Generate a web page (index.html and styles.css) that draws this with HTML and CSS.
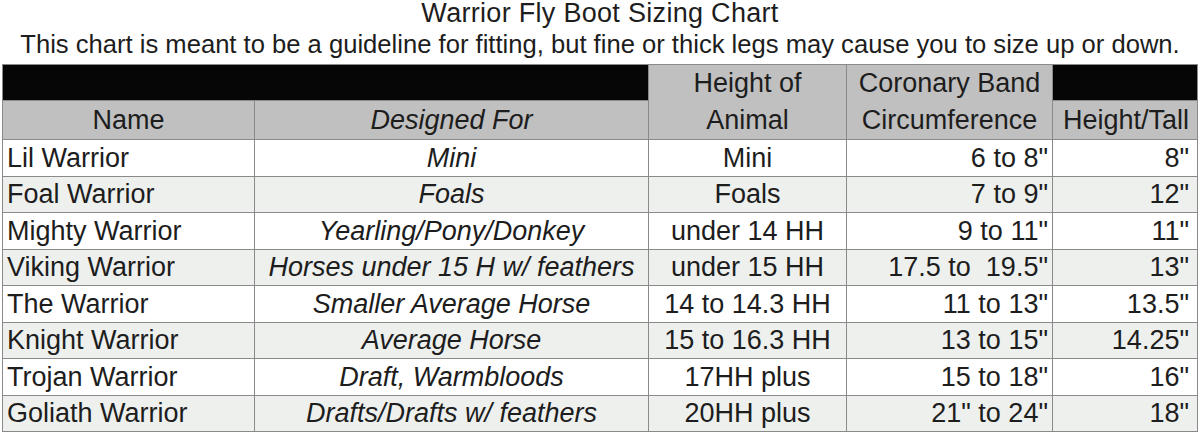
FILE: index.html
```html
<!DOCTYPE html>
<html lang="en">
<head>
<meta charset="utf-8">
<title>Warrior Fly Boot Sizing Chart</title>
<link rel="stylesheet" href="styles.css">
</head>
<body>
<div class="page">
  <h1 class="title">Warrior Fly Boot Sizing Chart</h1>
  <p class="subtitle">This chart is meant to be a guideline for fitting, but fine or thick legs may cause you to size up or down.</p>
  <table class="chart">
    <colgroup>
      <col class="c-name">
      <col class="c-for">
      <col class="c-height">
      <col class="c-band">
      <col class="c-tall">
    </colgroup>
    <thead>
      <tr class="h1">
        <th class="black" colspan="2"></th>
        <th class="grey center" rowspan="2">Height of<br>Animal</th>
        <th class="grey center" rowspan="2">Coronary Band<br>Circumference</th>
        <th class="black"></th>
      </tr>
      <tr class="h2">
        <th class="grey center">Name</th>
        <th class="grey center italic">Designed For</th>
        <th class="grey right tall">Height/Tall</th>
      </tr>
    </thead>
    <tbody>
      <tr><td class="left">Lil Warrior</td><td class="center italic">Mini</td><td class="center">Mini</td><td class="right">6 to 8"</td><td class="right tall">8"</td></tr>
      <tr class="alt"><td class="left">Foal Warrior</td><td class="center italic">Foals</td><td class="center">Foals</td><td class="right">7 to 9"</td><td class="right tall">12"</td></tr>
      <tr><td class="left">Mighty Warrior</td><td class="center italic">Yearling/Pony/Donkey</td><td class="center">under 14 HH</td><td class="right">9 to 11"</td><td class="right tall">11"</td></tr>
      <tr class="alt"><td class="left">Viking Warrior</td><td class="center italic">Horses under 15 H w/ feathers</td><td class="center">under 15 HH</td><td class="right">17.5 to&nbsp; 19.5"</td><td class="right tall">13"</td></tr>
      <tr><td class="left">The Warrior</td><td class="center italic">Smaller Average Horse</td><td class="center">14 to 14.3 HH</td><td class="right">11 to 13"</td><td class="right tall">13.5"</td></tr>
      <tr class="alt"><td class="left">Knight Warrior</td><td class="center italic">Average Horse</td><td class="center">15 to 16.3 HH</td><td class="right">13 to 15"</td><td class="right tall">14.25"</td></tr>
      <tr><td class="left">Trojan Warrior</td><td class="center italic">Draft, Warmbloods</td><td class="center">17HH plus</td><td class="right">15 to 18"</td><td class="right tall">16"</td></tr>
      <tr class="alt"><td class="left">Goliath Warrior</td><td class="center italic">Drafts/Drafts w/ feathers</td><td class="center">20HH plus</td><td class="right">21" to 24"</td><td class="right tall">18"</td></tr>
    </tbody>
  </table>
</div>
</body>
</html>
```
FILE: styles.css
```css
html, body {
  margin: 0;
  padding: 0;
  background: #ffffff;
}

.page {
  font-family: "Liberation Sans", Arial, sans-serif;
  color: #1d1d1d;
  width: 1200px;
}

.title {
  margin: 0;
  font-size: 27px;
  font-weight: normal;
  letter-spacing: 0.3px;
  line-height: 26px;
  text-align: center;
}

.subtitle {
  margin: 0 0 2px 0;
  font-size: 25.6px;
  line-height: 36px;
  text-align: center;
}

.chart {
  margin-left: 2px;
  width: 1195px;
  border-collapse: collapse;
  table-layout: fixed;
  font-size: 27px;
}

.c-name { width: 252px; }
.c-for { width: 394px; }
.c-height { width: 198px; }
.c-band { width: 206px; }
.c-tall { width: 145px; }

.chart th,
.chart td {
  border: 1px solid #8a8a8a;
  padding: 0 4px;
  font-weight: normal;
  vertical-align: middle;
  white-space: nowrap;
  line-height: 37px;
}

.chart .h1 { height: 36px; }
.chart .h2 { height: 37px; }

.chart tbody tr { height: 36.5px; }
.chart tbody td { line-height: 30px; }

.black { background: #060606; }
.grey { background: #c0c0c0; }
.alt td { background: #eef0ee; }

.left { text-align: left; }
.center { text-align: center; }
.right { text-align: right; }
.italic { font-style: italic; }
.chart .tall { padding-right: 8px; }
```
